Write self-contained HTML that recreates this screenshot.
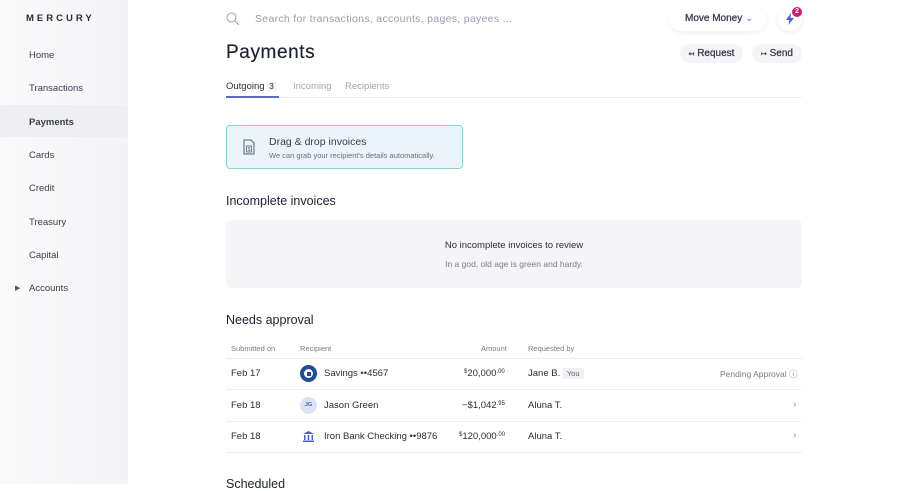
<!DOCTYPE html>
<html><head><meta charset="utf-8"><style>
*{box-sizing:border-box;margin:0;padding:0}
body{width:900px;height:484px;overflow:hidden;background:#fff;font-family:"Liberation Sans",sans-serif;color:#262a3a;position:relative}
.side{position:absolute;left:0;top:0;width:128px;height:484px;background:linear-gradient(90deg,#fafafb,#f4f4f7)}
.logo{position:absolute;left:26px;top:13px;font-size:9.5px;letter-spacing:3px;font-weight:bold;color:#2a2d3a}
.nav{position:absolute;left:29px;font-size:9.5px;color:#3a3d4c}
.act{position:absolute;left:0;top:105px;width:128px;height:32px;background:#eeeef3}
.a{position:absolute}
.btn{position:absolute;background:#f5f5f8;border-radius:12px;font-size:10px;color:#3a3d50;text-align:center;-webkit-text-stroke:.3px #3a3d50}
.th{position:absolute;top:344px;font-size:7.5px;color:#7a7d8c}
.row{position:absolute;font-size:9.5px;color:#2a2d3a}
.row sup{font-size:6px;vertical-align:0;position:relative;top:-3px}
.line{position:absolute;left:226px;width:576px;height:1px;background:#eeeef2}
</style></head><body>
<div class="side"></div>
<div class="act"></div>
<div class="logo">MERCURY</div>
<div class="nav" style="top:50px">Home</div>
<div class="nav" style="top:83px">Transactions</div>
<div class="nav" style="top:117px;font-weight:bold">Payments</div>
<div class="nav" style="top:150px">Cards</div>
<div class="nav" style="top:183px">Credit</div>
<div class="nav" style="top:217px">Treasury</div>
<div class="nav" style="top:250px">Capital</div>
<div class="nav" style="top:284px;left:15px;font-size:7px;color:#555">▶</div>
<div class="nav" style="top:283px">Accounts</div>

<svg class="a" style="left:226px;top:12px" width="14" height="14" viewBox="0 0 14 14"><circle cx="5.5" cy="5.5" r="4.5" fill="none" stroke="#9a9db0" stroke-width="1"/><line x1="9" y1="9" x2="13" y2="13" stroke="#9a9db0" stroke-width="1"/></svg>
<div class="a" style="left:255px;top:13px;font-size:10.5px;color:#9a9dac;letter-spacing:.3px">Search for transactions, accounts, pages, payees ...</div>
<div class="a" style="left:669px;top:7px;width:97px;height:24px;border-radius:12px;background:#fff;box-shadow:0 2px 6px rgba(0,0,0,.06);font-size:10px;color:#3a3d50;-webkit-text-stroke:.3px #3a3d50;padding:6px 0 0 16px">Move Money <span style="color:#6a7ab0;-webkit-text-stroke:0">⌄</span></div>
<div class="a" style="left:778px;top:7px;width:24px;height:24px;border-radius:12px;background:#fff;box-shadow:0 2px 6px rgba(0,0,0,.07)"></div>
<svg class="a" style="left:785px;top:13px" width="10" height="12" viewBox="0 0 10 12"><path d="M6 0L1 7h3.5L3.5 12 9 5H5.5z" fill="#4a5ed0"/></svg>
<div class="a" style="left:792px;top:7px;width:10px;height:10px;border-radius:5px;background:#d01a6a;color:#fff;font-size:7px;text-align:center;line-height:10px;font-weight:bold">2</div>

<div class="a" style="left:226px;top:42px;font-size:19px;color:#1e2130;letter-spacing:.6px;-webkit-text-stroke:.2px #1e2130">Payments</div>
<div class="btn" style="left:680px;top:44px;width:63px;height:19px;line-height:19px"><span style="font-size:7px">↤</span> Request</div>
<div class="btn" style="left:752px;top:44px;width:50px;height:19px;line-height:19px"><span style="font-size:7px">↦</span> Send</div>

<div class="a" style="left:226px;top:81px;font-size:9.5px;color:#2a2d3a">Outgoing <span style="background:#f0f0f4;padding:0 2px;font-size:8px">3</span></div>
<div class="a" style="left:226px;top:96px;width:53px;height:1.5px;background:#5a6bc0"></div>
<div class="a" style="left:293px;top:81px;font-size:9.5px;color:#a0a3b2">Incoming</div>
<div class="a" style="left:345px;top:81px;font-size:9.5px;color:#a0a3b2">Recipients</div>
<div class="a" style="left:279px;top:97px;width:523px;height:1px;background:#efeff3"></div>

<div class="a" style="left:226px;top:125px;width:237px;height:44px;border:1px solid #86d6cc;border-radius:4px;background:#eaf4fb"></div>
<svg class="a" style="left:243px;top:139px" width="12" height="16" viewBox="0 0 12 16"><path d="M1 1h7l3 3v11H1z" fill="none" stroke="#5a5d70" stroke-width="1"/><rect x="3.5" y="7" width="5" height="6" fill="none" stroke="#5a5d70" stroke-width=".8"/><text x="6" y="12" font-size="5" text-anchor="middle" fill="#5a5d70" font-family="Liberation Sans">$</text></svg>
<div class="a" style="left:269px;top:136px;font-size:10.5px;color:#3a3d50">Drag &amp; drop invoices</div>
<div class="a" style="left:269px;top:151px;font-size:7.5px;color:#6a6d80">We can grab your recipient's details automatically.</div>

<div class="a" style="left:226px;top:194px;font-size:12.5px;color:#1e2130">Incomplete invoices</div>
<div class="a" style="left:226px;top:220px;width:576px;height:68px;background:#f5f5f8;border-radius:6px"></div>
<div class="a" style="left:226px;top:240px;width:576px;text-align:center;font-size:9.5px;color:#2a2d3a">No incomplete invoices to review</div>
<div class="a" style="left:226px;top:259px;width:576px;text-align:center;font-size:8.5px;color:#7a7d8c">In a god, old age is green and hardy.</div>

<div class="a" style="left:226px;top:313px;font-size:12.5px;color:#1e2130">Needs approval</div>
<div class="th" style="left:231px">Submitted on</div>
<div class="th" style="left:300px">Recipient</div>
<div class="th" style="left:481px">Amount</div>
<div class="th" style="left:528px">Requested by</div>
<div class="line" style="top:358px"></div>
<div class="line" style="top:389px"></div>
<div class="line" style="top:421px"></div>
<div class="line" style="top:452px"></div>

<div class="row" style="left:231px;top:368px">Feb 17</div>
<div class="a" style="left:300px;top:365px;width:17px;height:17px;border-radius:9px;background:#1e4e94"></div>
<div class="a" style="left:304px;top:369px;width:9px;height:9px;border-radius:5px;background:#fff"></div>
<div class="a" style="left:306.5px;top:371.5px;width:4px;height:4px;background:#1e4e94"></div>
<div class="row" style="left:324px;top:368px">Savings ••4567</div>
<div class="row" style="left:464px;top:368px"><sup>$</sup>20,000<sup>.00</sup></div>
<div class="row" style="left:528px;top:368px">Jane B. <span style="background:#eef0f8;font-size:7.5px;padding:1px 4px;color:#5a5d70">You</span></div>
<div class="a" style="left:720px;top:368px;font-size:8.5px;color:#7a7d8c">Pending Approval ⓘ</div>

<div class="row" style="left:231px;top:400px">Feb 18</div>
<div class="a" style="left:300px;top:397px;width:17px;height:17px;border-radius:9px;background:#dbe3f7;font-size:5.5px;color:#4a5ab0;text-align:center;line-height:17px;font-weight:bold">JG</div>
<div class="row" style="left:324px;top:400px">Jason Green</div>
<div class="row" style="left:462px;top:400px">−$1,042<sup>.95</sup></div>
<div class="row" style="left:528px;top:400px">Aluna T.</div>
<div class="a" style="left:793px;top:399px;font-size:10px;color:#8a8d9c">›</div>

<div class="row" style="left:231px;top:431px">Feb 18</div>
<svg class="a" style="left:300px;top:429px" width="17" height="15" viewBox="0 0 17 15"><path d="M3 5L8.5 2 14 5z" fill="#4a5ed0"/><rect x="4" y="6" width="1.5" height="5" fill="#4a5ed0"/><rect x="7.7" y="6" width="1.5" height="5" fill="#4a5ed0"/><rect x="11.5" y="6" width="1.5" height="5" fill="#4a5ed0"/><rect x="3" y="11.5" width="11" height="1.5" fill="#4a5ed0"/></svg>
<div class="row" style="left:324px;top:431px">Iron Bank Checking ••9876</div>
<div class="row" style="left:459px;top:431px"><sup>$</sup>120,000<sup>.00</sup></div>
<div class="row" style="left:528px;top:431px">Aluna T.</div>
<div class="a" style="left:793px;top:430px;font-size:10px;color:#8a8d9c">›</div>

<div class="a" style="left:226px;top:477px;font-size:12.5px;color:#1e2130">Scheduled</div>
</body></html>
